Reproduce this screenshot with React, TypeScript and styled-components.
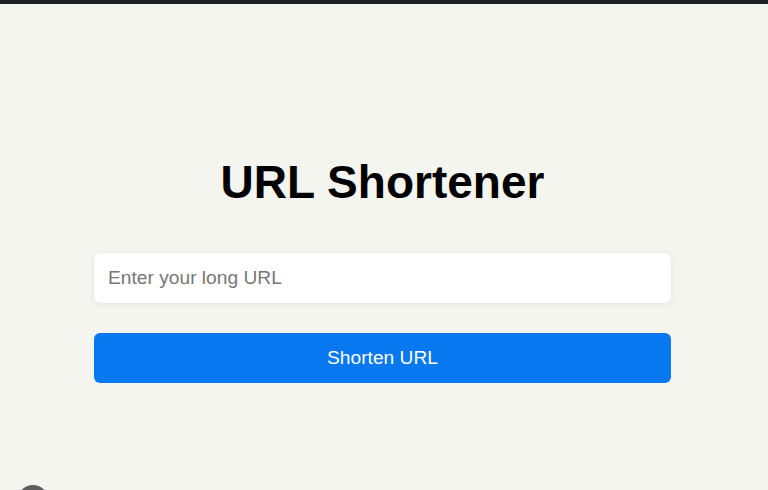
import React from "react";
import styled, { createGlobalStyle } from "styled-components";

const Global = createGlobalStyle`
  html, body { margin: 0; padding: 0; background: #f5f5ef; }
  body { font-family: "Liberation Sans", Arial, sans-serif; overflow: hidden; }
  * { box-sizing: border-box; }
`;

const Page = styled.div`
  min-height: 490px;
  display: flex;
  flex-direction: column;
`;

const TopBar = styled.div`
  height: 4px;
  background: #1f2023;
`;

const Main = styled.main`
  display: flex;
  flex-direction: column;
  align-items: stretch;
  padding: 152px 97px 0 94px;
`;

const Title = styled.h1`
  margin: 0 0 44px;
  font-size: 46px;
  line-height: 53px;
  font-weight: 700;
  text-align: center;
  color: #000;
`;

const Input = styled.input`
  height: 50px;
  border: none;
  border-radius: 7px;
  background: #fff;
  box-shadow: 0 1px 6px rgba(0, 0, 0, 0.08);
  padding: 0 14px;
  font-family: inherit;
  font-size: 19.2px;
  color: #222;
  outline: none;
  &::placeholder { color: #777; }
`;

const Button = styled.button`
  margin-top: 30px;
  height: 50px;
  border: none;
  border-radius: 6px;
  background: #0778ef;
  color: #fff;
  font-family: inherit;
  font-size: 19.2px;
  cursor: pointer;
`;

const Fab = styled.div`
  position: fixed;
  left: 17px;
  top: 485px;
  width: 32px;
  height: 32px;
  border-radius: 50%;
  background: #5f5f5f;
`;

export default function App() {
  return (
    <Page>
      <Global />
      <TopBar />
      <Main>
        <Title>URL Shortener</Title>
        <Input placeholder="Enter your long URL" />
        <Button>Shorten URL</Button>
      </Main>
      <Fab />
    </Page>
  );
}
